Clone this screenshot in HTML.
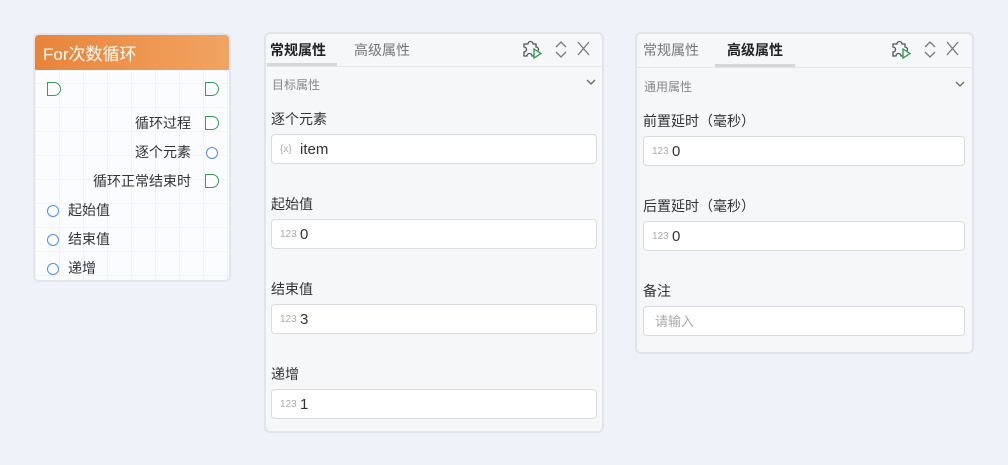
<!DOCTYPE html><html><head><meta charset="utf-8"><style>
*{box-sizing:border-box;margin:0;padding:0}
body{width:1008px;height:465px;background:#eff2f9;font-family:"Liberation Sans","Noto Sans CJK SC",sans-serif;position:relative;overflow:hidden;color:#333}
.a{position:absolute}
.node{left:33px;top:33px;width:198px;height:249px;border:2px solid #e2e5ec;border-radius:6px;background:#fbfcff;background-image:linear-gradient(#f0f2f7 1px,transparent 1px),linear-gradient(90deg,#f0f2f7 1px,transparent 1px);background-size:24px 24px;overflow:hidden}
.hd{left:0;top:0;width:100%;height:35px;background:linear-gradient(90deg,#e8843a,#f2a462);color:#fff;font-size:17px;padding:5px 8px}
.row{font-size:14px;color:#333;height:20px;line-height:20px}
.flag{width:14px;height:14px;border:1.5px solid #3a9a5b;border-radius:0 7px 7px 0;background:#fff}
.circ{width:12px;height:12px;border:1.5px solid #4a8cf0;border-radius:50%;background:#fff}
.panel{background:#f6f7f9;border:2px solid #e2e4e8;border-radius:6px}
.tab{font-size:14px;top:6px}
.sec{font-size:12px;color:#888}
.lbl{font-size:14px;color:#333}
.inp{height:30px;background:#fff;border:1px solid #d8dbe0;border-radius:4px;font-size:15px;color:#333;padding-left:28px;line-height:30px}
.ic{position:absolute;left:8px;top:0;font-size:10px;color:#aaa;line-height:29px}
</style></head><body>
<div class="a node">
<div class="a hd">For次数循环</div>
<div class="a flag" style="left:12px;top:47px"></div>
<div class="a flag" style="left:170px;top:47px"></div>
<div class="a row" style="right:38px;top:78px">循环过程</div><div class="a flag" style="left:170px;top:81px"></div>
<div class="a row" style="right:38px;top:107px">逐个元素</div><div class="a circ" style="left:171px;top:112px"></div>
<div class="a row" style="right:38px;top:136px">循环正常结束时</div><div class="a flag" style="left:170px;top:139px"></div>
<div class="a circ" style="left:12px;top:170px"></div><div class="a row" style="left:33px;top:165px">起始值</div>
<div class="a circ" style="left:12px;top:199px"></div><div class="a row" style="left:33px;top:194px">结束值</div>
<div class="a circ" style="left:12px;top:228px"></div><div class="a row" style="left:33px;top:223px">递增</div>
</div>

<div class="a panel" style="left:264px;top:32px;width:340px;height:401px">
<div class="a" style="left:0;top:32px;width:100%;height:1px;background:#e4e6ea"></div>
<div class="a" style="left:1px;top:29px;width:70px;height:3px;background:#d4d6da"></div>
<div class="a tab" style="left:4px;font-weight:bold;color:#222">常规属性</div>
<div class="a tab" style="left:88px;color:#777">高级属性</div>
<svg class="a" style="left:256px;top:5px" width="72" height="22" viewBox="0 0 72 22" fill="none" stroke-width="1.3"><path d="M2 5h4a2.5 2.5 0 0 1 5 0h3v3a2.5 2.5 0 0 1 0 5v4H10a2.5 2.5 0 0 0-5 0H2v-4a2.5 2.5 0 0 0 0-5z" stroke="#555"/><path d="M12 10l7 4.5-7 4.5z" stroke="#2a9a4a" fill="#f6f7f9"/><path d="M34 8l5-5 5 5M34 13l5 5 5-5" stroke="#777"/><path d="M56 3l11 13M67 3L56 16" stroke="#777"/></svg>
<div class="a sec" style="left:6px;top:42px">目标属性</div>
<svg class="a" style="left:320px;top:44px" width="10" height="8"><path d="M1 2l4 4 4-4" stroke="#666" fill="none" stroke-width="1.3"/></svg>
<div class="a lbl" style="left:5px;top:75px">逐个元素</div>
<div class="a inp" style="left:5px;top:100px;width:326px"><span class="ic">{x}</span>item</div>
<div class="a lbl" style="left:5px;top:160px">起始值</div>
<div class="a inp" style="left:5px;top:185px;width:326px"><span class="ic">123</span>0</div>
<div class="a lbl" style="left:5px;top:245px">结束值</div>
<div class="a inp" style="left:5px;top:270px;width:326px"><span class="ic">123</span>3</div>
<div class="a lbl" style="left:5px;top:330px">递增</div>
<div class="a inp" style="left:5px;top:355px;width:326px"><span class="ic">123</span>1</div>
</div>

<div class="a panel" style="left:635px;top:32px;width:339px;height:322px">
<div class="a" style="left:0;top:33px;width:100%;height:1px;background:#e4e6ea"></div>
<div class="a" style="left:78px;top:30px;width:80px;height:3px;background:#d4d6da"></div>
<div class="a tab" style="left:6px;color:#777">常规属性</div>
<div class="a tab" style="left:90px;font-weight:bold;color:#222">高级属性</div>
<svg class="a" style="left:254px;top:5px" width="72" height="22" viewBox="0 0 72 22" fill="none" stroke-width="1.3"><path d="M2 5h4a2.5 2.5 0 0 1 5 0h3v3a2.5 2.5 0 0 1 0 5v4H10a2.5 2.5 0 0 0-5 0H2v-4a2.5 2.5 0 0 0 0-5z" stroke="#555"/><path d="M12 10l7 4.5-7 4.5z" stroke="#2a9a4a" fill="#f6f7f9"/><path d="M34 8l5-5 5 5M34 13l5 5 5-5" stroke="#777"/><path d="M56 3l11 13M67 3L56 16" stroke="#777"/></svg>
<div class="a sec" style="left:7px;top:44px">通用属性</div>
<svg class="a" style="left:318px;top:46px" width="10" height="8"><path d="M1 2l4 4 4-4" stroke="#666" fill="none" stroke-width="1.3"/></svg>
<div class="a lbl" style="left:6px;top:77px">前置延时（毫秒）</div>
<div class="a inp" style="left:6px;top:102px;width:322px"><span class="ic">123</span>0</div>
<div class="a lbl" style="left:6px;top:162px">后置延时（毫秒）</div>
<div class="a inp" style="left:6px;top:187px;width:322px"><span class="ic">123</span>0</div>
<div class="a lbl" style="left:6px;top:247px">备注</div>
<div class="a inp" style="left:6px;top:272px;width:322px;padding-left:11px;font-size:13px;color:#aaa">请输入</div>
</div>
</body></html>
